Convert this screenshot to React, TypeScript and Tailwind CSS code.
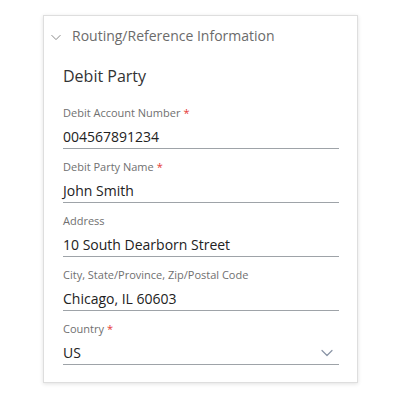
import React from "react";

const Chevron = ({ className }: { className?: string }) => (
  <svg className={className} viewBox="0 0 12 8" fill="none" stroke="currentColor" strokeWidth="1.2" strokeLinecap="round" strokeLinejoin="round">
    <path d="M1 1.5 L6 6.5 L11 1.5" />
  </svg>
);

const Field = ({ label, value, required, select }: { label: string; value: string; required?: boolean; select?: boolean }) => (
  <div className="flex flex-col">
    <div className="text-[11px] leading-[16px] text-[#707070]">
      {label}
      {required && <span className="text-[#e53935] ml-[3px]">*</span>}
    </div>
    <div className="flex items-center justify-between h-[28px] border-b-[1.5px] border-[#9ea3a8] pt-[4px]">
      <span className="text-[14px] text-[#222]">{value}</span>
      {select && <Chevron className="w-[12px] h-[8px] mr-[6px] text-[#8a94a6]" />}
    </div>
  </div>
);

export default function App() {
  return (
    <div className="w-[400px] h-[400px] bg-white pt-[15px] pl-[43px]" style={{ fontFamily: '"Open Sans", sans-serif' }}>
      <div className="w-[315px] h-[368px] border border-[#dedede] shadow-[0_1px_4px_rgba(0,0,0,0.12)] bg-white">
        <div className="flex items-center h-[38px] pl-[7px]">
          <Chevron className="w-[10px] h-[7px] text-[#8a8a8a] mt-[4px]" />
          <span className="ml-[11px] text-[14px] text-[#6b6b6b]">Routing/Reference Information</span>
        </div>
        <div className="pl-[19px] pr-[18px]">
          <div className="text-[16px] text-[#333] h-[51px] pb-[7px] flex items-center">Debit Party</div>
          <div className="flex flex-col gap-[10px]">
            <Field label="Debit Account Number" value="004567891234" required />
            <Field label="Debit Party Name" value="John Smith" required />
            <Field label="Address" value="10 South Dearborn Street" />
            <Field label="City, State/Province, Zip/Postal Code" value="Chicago, IL 60603" />
            <Field label="Country" value="US" required select />
          </div>
        </div>
      </div>
    </div>
  );
}
